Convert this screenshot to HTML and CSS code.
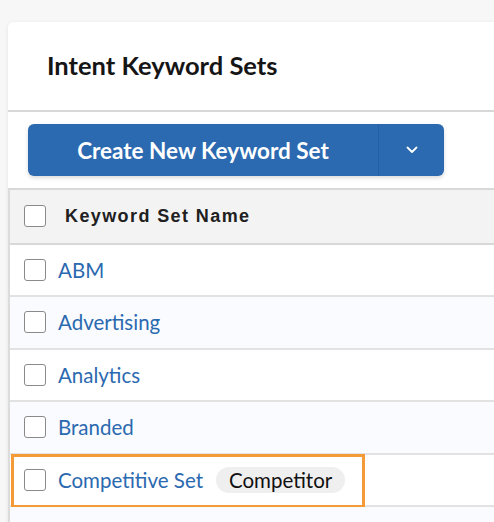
FILE: index.html
```html
<!DOCTYPE html>
<html lang="en">

<head>
    <meta charset="UTF-8">
    <meta name="viewport" content="width=device-width, initial-scale=1.0">
    <title>Intent Keyword Sets</title>
    <link rel="stylesheet" href="styles.css">
</head>

<body>

    <div class="card">
        <!-- Header -->
        <div class="card-header">
            <h1>Intent Keyword Sets</h1>
        </div>

        <!-- Toolbar -->
        <div class="toolbar">
            <div class="split-btn">
                <button class="btn-main">Create New Keyword Set</button>
                <button class="btn-toggle" aria-label="More options">
                    <svg width="12" height="8" viewBox="0 0 12 8">
                        <path d="M1.5 1.5 L6 6 L10.5 1.5" fill="none" stroke="#fff" stroke-width="1.8" stroke-linecap="round" stroke-linejoin="round" />
                    </svg>
                </button>
            </div>
        </div>

        <!-- Keyword sets table -->
        <div class="table">
            <div class="row head">
                <span class="check"></span>
                <span class="col-name">Keyword Set Name</span>
            </div>
            <div class="row">
                <span class="check"></span>
                <a class="set-link" href="#">ABM</a>
            </div>
            <div class="row alt">
                <span class="check"></span>
                <a class="set-link" href="#">Advertising</a>
            </div>
            <div class="row">
                <span class="check"></span>
                <a class="set-link" href="#">Analytics</a>
            </div>
            <div class="row alt">
                <span class="check"></span>
                <a class="set-link" href="#">Branded</a>
            </div>
            <div class="row">
                <span class="check"></span>
                <a class="set-link" href="#">Competitive Set</a>
                <span class="badge">Competitor</span>
                <span class="focus-ring"></span>
            </div>
            <div class="row alt"></div>
        </div>
    </div>

</body>

</html>
```

FILE: styles.css
```css
/* Global styles */
* {
    margin: 0;
    padding: 0;
    box-sizing: border-box;
}

body {
    font-family: 'Lato', 'Liberation Sans', sans-serif;
    background-color: #f7f7f7;
    padding: 22px 0 0 8px;
    overflow: hidden;
    height: 522px;
}

/* Card */
.card {
    background-color: #fff;
    width: 486px;
    border-radius: 5px 0 0 0;
    box-shadow: 0 1px 4px rgba(0, 0, 0, 0.08);
}

.card-header {
    height: 90px;
    padding-left: 39px;
    display: flex;
    align-items: center;
    border-bottom: 2px solid #d8d8d8;
}

h1 {
    font-size: 25.5px;
    font-weight: 700;
    color: #151515;
    padding-bottom: 2px;
}

/* Toolbar */
.toolbar {
    height: 76px;
    padding: 12px 20px;
}

.split-btn {
    display: flex;
    width: 416px;
    height: 52px;
    background-color: #2b69b0;
    border-radius: 6px;
    box-shadow: 0 2px 4px rgba(0, 0, 0, 0.15);
    overflow: hidden;
}

.split-btn button {
    background: none;
    border: none;
    color: #fff;
    font-family: inherit;
    cursor: pointer;
}

.btn-main {
    width: 351px;
    font-size: 22.5px;
    font-weight: 700;
    border-right: 1px solid #2760a2 !important;
}

.btn-toggle {
    flex: 1;
    display: flex;
    align-items: center;
    justify-content: center;
}

/* Table */
.table {
    border-top: 2px solid #d8d8d8;
    border-left: 2px solid #dcdcdc;
}

.row {
    position: relative;
    display: flex;
    align-items: center;
    height: 52.5px;
    padding-left: 14px;
    border-bottom: 2px solid #e2e2e2;
}

.row.head {
    height: 54.5px;
    background-color: #f3f3f3;
    border-bottom-color: #d8d8d8;
}

.row.alt {
    background-color: #f9fbfe;
}

.check {
    width: 22px;
    height: 22px;
    border: 1.5px solid #8a8a8a;
    border-radius: 3px;
    background-color: #fff;
    margin-right: 12px;
    flex-shrink: 0;
}

.col-name {
    font-family: 'Liberation Sans', sans-serif;
    font-size: 18px;
    font-weight: 700;
    color: #202020;
    letter-spacing: 1.4px;
    margin-left: 7px;
}

.set-link {
    font-size: 20.5px;
    color: #2b69b0;
    text-decoration: none;
}

.badge {
    margin-left: 13px;
    background-color: #efefef;
    border-radius: 13px;
    padding: 1px 13px;
    font-size: 20.5px;
    color: #111;
}

/* Orange focus outline on the competitor row */
.focus-ring {
    position: absolute;
    left: 1px;
    top: -1px;
    width: 354px;
    height: 54px;
    border: 3px solid #f49a36;
    pointer-events: none;
}
```
